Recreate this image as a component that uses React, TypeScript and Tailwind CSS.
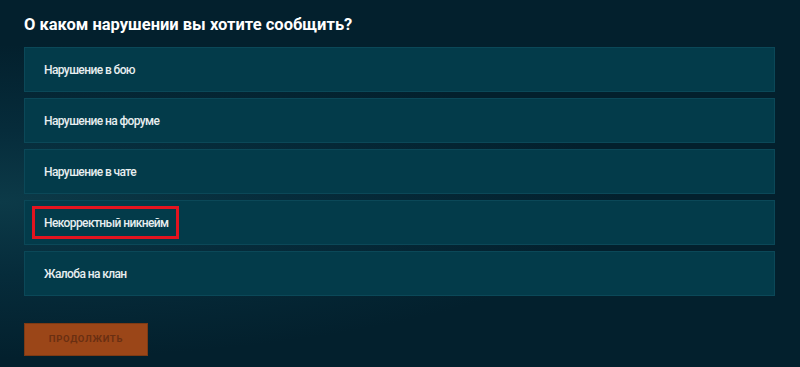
import * as React from 'react';

const options = [
  'Нарушение в бою',
  'Нарушение на форуме',
  'Нарушение в чате',
  'Некорректный никнейм',
  'Жалоба на клан',
];

export default function App() {
  return (
    <div className="h-[367px] w-[800px] overflow-hidden bg-[#03202d] bg-[radial-gradient(ellipse_at_0%_55%,#0c3a48_0%,#062c3b_25%,#03202d_55%)] font-['Roboto',sans-serif] text-white">
      <div className="pl-6 pr-[25px] pt-[14px]">
        <h1 className="text-[16.5px] font-bold leading-[22px]">
          О каком нарушении вы хотите сообщить?
        </h1>
        <div className="mt-[11px] flex flex-col gap-[6px]">
          {options.map((label, i) => (
            <div
              key={label}
              className="flex h-[45px] items-center border border-[#0b4858] bg-[#033b4a] pl-[19px]"
            >
              {i === 3 ? (
                <span className="-ml-[12px] flex h-[33px] w-[147px] items-center whitespace-nowrap border-[3px] border-[#e3141f] pl-[9px] text-[12px] font-medium tracking-[-0.6px] text-[#e8eef0]">
                  {label}
                </span>
              ) : (
                <span className="whitespace-nowrap text-[12px] font-medium tracking-[-0.6px] text-[#e8eef0]">
                  {label}
                </span>
              )}
            </div>
          ))}
        </div>
        <button className="mt-[27px] flex h-[33px] w-[124px] items-center justify-center border border-[#7d3a14] bg-[#9b4618] text-[9.5px] font-bold tracking-[0.7px] text-[#6a2f12]">
          ПРОДОЛЖИТЬ
        </button>
      </div>
    </div>
  );
}
